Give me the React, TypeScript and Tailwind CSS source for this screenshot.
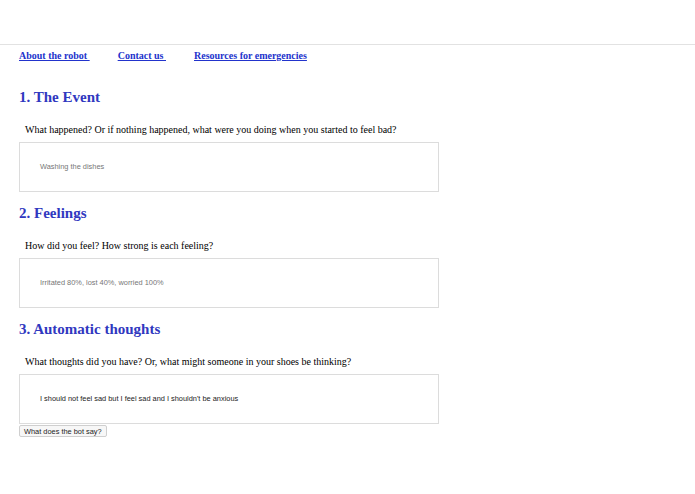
import React from 'react';

const sections = [
  {
    title: '1. The Event',
    question: 'What happened? Or if nothing happened, what were you doing when you started to feel bad?',
    value: 'Washing the dishes',
    filled: false,
  },
  {
    title: '2. Feelings',
    question: 'How did you feel? How strong is each feeling?',
    value: 'Irritated 80%, lost 40%, worried 100%',
    filled: false,
  },
  {
    title: '3. Automatic thoughts',
    question: 'What thoughts did you have? Or, what might someone in your shoes be thinking?',
    value: "I should not feel sad but I feel sad and I shouldn't be anxious",
    filled: true,
  },
];

const App = () => {
  return (
    <div className="min-h-[494px] bg-white font-['Liberation_Serif',serif] text-black">
      {/* Top bar */}
      <div className="h-[45px] border-b border-[#e2e2e2]"></div>

      {/* Nav */}
      <nav className="flex pl-[19px] pt-[5px] text-[10px] font-bold leading-[12px]">
        <a href="#" className="mr-[28px] text-[#2233cc] underline">About the robot&nbsp;</a>
        <a href="#" className="mr-[28px] text-[#2233cc] underline">Contact us&nbsp;</a>
        <a href="#" className="text-[#2233cc] underline">Resources for emergencies</a>
      </nav>

      <div className="px-[19px]">
        {sections.map((s, i) => (
          <div key={i} className={i === 0 ? 'pt-[26px]' : 'pt-[12px]'}>
            <h2 className="text-[15px] font-bold leading-[18px] text-[#3038c0]">{s.title}</h2>
            <p className="mt-[18px] pl-[6px] text-[10px] leading-[12px]">{s.question}</p>
            <div className="mt-[6px] flex h-[50px] w-[420px] items-center border border-[#dcdcdc] pl-[20px]">
              <span
                className={`font-['Liberation_Sans',sans-serif] text-[7.4px] ${s.filled ? 'text-[#222]' : 'text-[#777]'}`}
              >
                {s.value}
              </span>
            </div>
          </div>
        ))}
        <button className="mt-[1px] flex h-[12px] items-center rounded-[2px] border border-[#cfcfcf] bg-[#f7f7f7] px-[4px] font-['Liberation_Sans',sans-serif] text-[7.4px] leading-[9px] text-[#222]">
          What does the bot say?
        </button>
      </div>
    </div>
  );
};

export default App;
